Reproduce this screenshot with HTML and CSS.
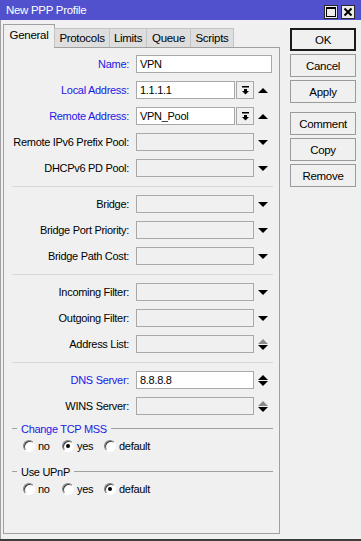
FILE: index.html
```html
<!DOCTYPE html>
<html>
<head>
<meta charset="utf-8">
<link rel="stylesheet" href="styles.css">
</head>
<body>
<div class="window">
  <div class="titlebar">
    <span class="title">New PPP Profile</span>
    <div class="tb-buttons">
      <span class="tb-btn"><svg width="10" height="10" viewBox="0 0 10 10"><rect x="0.5" y="0.5" width="9" height="9" fill="none" stroke="#000" stroke-width="1"/><rect x="0" y="0" width="10" height="2" fill="#000"/></svg></span>
      <span class="tb-btn"><svg width="10" height="10" viewBox="0 0 10 10"><path d="M1.5 1.5 L8.5 8.5 M8.5 1.5 L1.5 8.5" stroke="#000" stroke-width="2"/></svg></span>
    </div>
  </div>
  <div class="client">
    <div class="main">
      <div class="tabs">
        <div class="tab active w-general">General</div>
        <div class="tab w-protocols">Protocols</div>
        <div class="tab w-limits">Limits</div>
        <div class="tab w-queue">Queue</div>
        <div class="tab w-scripts">Scripts</div>
      </div>
      <div class="panel">
        <div class="form">
          <div class="row">
            <label class="lbl blue">Name:</label>
            <div class="field"><div class="box filled">VPN</div></div>
          </div>
          <div class="row">
            <label class="lbl blue">Local Address:</label>
            <div class="field"><div class="box filled">1.1.1.1</div><span class="combo"><svg width="7" height="9" viewBox="0 0 7 9"><rect x="0" y="0" width="7" height="1.5" fill="#000"/><rect x="2" y="3" width="3" height="2" fill="#000"/><polygon points="0,5 7,5 3.5,8.5" fill="#000"/></svg></span><span class="icon"><svg width="10" height="5" viewBox="0 0 10 5"><polygon points="0,5 10,5 5,0" fill="#000"/></svg></span></div>
          </div>
          <div class="row">
            <label class="lbl blue">Remote Address:</label>
            <div class="field"><div class="box filled">VPN_Pool</div><span class="combo"><svg width="7" height="9" viewBox="0 0 7 9"><rect x="0" y="0" width="7" height="1.5" fill="#000"/><rect x="2" y="3" width="3" height="2" fill="#000"/><polygon points="0,5 7,5 3.5,8.5" fill="#000"/></svg></span><span class="icon"><svg width="10" height="5" viewBox="0 0 10 5"><polygon points="0,5 10,5 5,0" fill="#000"/></svg></span></div>
          </div>
          <div class="row">
            <label class="lbl">Remote IPv6 Prefix Pool:</label>
            <div class="field"><div class="box"></div><span class="icon"><svg width="10" height="5" viewBox="0 0 10 5"><polygon points="0,0 10,0 5,5" fill="#000"/></svg></span></div>
          </div>
          <div class="row">
            <label class="lbl">DHCPv6 PD Pool:</label>
            <div class="field"><div class="box"></div><span class="icon"><svg width="10" height="5" viewBox="0 0 10 5"><polygon points="0,0 10,0 5,5" fill="#000"/></svg></span></div>
          </div>
          <div class="sep"></div>
          <div class="row">
            <label class="lbl">Bridge:</label>
            <div class="field"><div class="box"></div><span class="icon"><svg width="10" height="5" viewBox="0 0 10 5"><polygon points="0,0 10,0 5,5" fill="#000"/></svg></span></div>
          </div>
          <div class="row">
            <label class="lbl">Bridge Port Priority:</label>
            <div class="field"><div class="box"></div><span class="icon"><svg width="10" height="5" viewBox="0 0 10 5"><polygon points="0,0 10,0 5,5" fill="#000"/></svg></span></div>
          </div>
          <div class="row">
            <label class="lbl">Bridge Path Cost:</label>
            <div class="field"><div class="box"></div><span class="icon"><svg width="10" height="5" viewBox="0 0 10 5"><polygon points="0,0 10,0 5,5" fill="#000"/></svg></span></div>
          </div>
          <div class="sep"></div>
          <div class="row">
            <label class="lbl">Incoming Filter:</label>
            <div class="field"><div class="box"></div><span class="icon"><svg width="10" height="5" viewBox="0 0 10 5"><polygon points="0,0 10,0 5,5" fill="#000"/></svg></span></div>
          </div>
          <div class="row">
            <label class="lbl">Outgoing Filter:</label>
            <div class="field"><div class="box"></div><span class="icon"><svg width="10" height="5" viewBox="0 0 10 5"><polygon points="0,0 10,0 5,5" fill="#000"/></svg></span></div>
          </div>
          <div class="row">
            <label class="lbl">Address List:</label>
            <div class="field"><div class="box"></div><span class="icon"><svg width="10" height="11" viewBox="0 0 10 11"><polygon points="0,5 10,5 5,0" fill="#8a8a8a"/><polygon points="0,6 10,6 5,11" fill="#000"/></svg></span></div>
          </div>
          <div class="sep"></div>
          <div class="row">
            <label class="lbl blue">DNS Server:</label>
            <div class="field"><div class="box filled">8.8.8.8</div><span class="icon"><svg width="10" height="11" viewBox="0 0 10 11"><polygon points="0,5 10,5 5,0" fill="#000"/><polygon points="0,6 10,6 5,11" fill="#000"/></svg></span></div>
          </div>
          <div class="row">
            <label class="lbl">WINS Server:</label>
            <div class="field"><div class="box"></div><span class="icon"><svg width="10" height="11" viewBox="0 0 10 11"><polygon points="0,5 10,5 5,0" fill="#8a8a8a"/><polygon points="0,6 10,6 5,11" fill="#000"/></svg></span></div>
          </div>
        </div>
        <div class="group first">
          <div class="group-head"><span class="dash"></span><span class="blue">Change TCP MSS</span><span class="gline"></span></div>
          <div class="radios">
            <span class="radio r-no"><span class="dot"></span>no</span>
            <span class="radio r-yes"><span class="dot checked"></span>yes</span>
            <span class="radio"><span class="dot"></span>default</span>
          </div>
        </div>
        <div class="group">
          <div class="group-head"><span class="dash"></span><span>Use UPnP</span><span class="gline"></span></div>
          <div class="radios">
            <span class="radio r-no"><span class="dot"></span>no</span>
            <span class="radio r-yes"><span class="dot"></span>yes</span>
            <span class="radio"><span class="dot checked"></span>default</span>
          </div>
        </div>
      </div>
    </div>
    <div class="buttons">
      <button class="btn default">OK</button>
      <button class="btn">Cancel</button>
      <button class="btn">Apply</button>
      <button class="btn spaced">Comment</button>
      <button class="btn">Copy</button>
      <button class="btn">Remove</button>
    </div>
  </div>
</div>
</body>
</html>
```

FILE: styles.css
```css
* { box-sizing: border-box; margin: 0; padding: 0; }
html, body { margin: 0; background: #f0f0f0; }
body {
  font-family: "Liberation Sans", Arial, sans-serif;
  font-size: 11px;
  letter-spacing: -0.3px;
  color: #000;
}
.window {
  width: 361px;
  height: 541px;
  display: flex;
  flex-direction: column;
  background: #f0f0f0;
  border-bottom: 2px solid #3c3c3c;
}
.titlebar {
  height: 20px;
  flex: none;
  background: #5151cd;
  display: flex;
  align-items: center;
  justify-content: space-between;
  padding: 0 6px;
  color: #fff;
  font-size: 11.5px;
}
.tb-buttons { display: flex; gap: 3px; margin-top: 4px; }
.tb-btn {
  width: 14px;
  height: 14px;
  background: #ececec;
  border: 1px solid #2a2a2a;
  display: flex;
  align-items: center;
  justify-content: center;
}
.client {
  flex: 1;
  display: flex;
  gap: 10px;
  padding: 4px 5px 5px 2px;
  border-left: 1px solid #a0a0a0;
}
.main {
  width: 277px;
  display: flex;
  flex-direction: column;
}
.tabs {
  height: 23px;
  display: flex;
  align-items: flex-end;
  position: relative;
  z-index: 1;
}
.tab {
  height: 19px;
  display: flex;
  align-items: center;
  justify-content: center;
  background: #dedede;
  border: 1px solid #c4c4c4;
  border-bottom: none;
  margin-left: -1px;
  font-size: 11.5px;
}
.tab.active {
  height: 24px;
  margin-bottom: -1px;
  margin-left: 0;
  background: #f0f0f0;
  border-color: #a0a0a0;
  padding-bottom: 3px;
}
.w-general { width: 52px; }
.w-protocols { width: 56px; }
.w-limits { width: 38px; }
.w-queue { width: 45px; }
.w-scripts { width: 44px; }
.panel {
  flex: 1;
  border: 1px solid #a0a0a0;
  padding: 7px 6px 0 8px;
}
.form {
  display: flex;
  flex-direction: column;
  gap: 8px;
}
.row {
  display: grid;
  grid-template-columns: 117px 136px;
  column-gap: 7px;
  height: 18px;
  align-items: center;
}
.lbl { text-align: right; white-space: nowrap; }
.blue { color: #1a1ae6; }
.field { display: flex; align-items: center; height: 18px; }
.box {
  flex: 1;
  height: 18px;
  border: 1px solid #a8a8a8;
  background: #f0f0f0;
  padding-left: 3px;
  line-height: 16px;
  white-space: nowrap;
}
.box.filled { background: #fff; }
.combo {
  width: 18px;
  height: 18px;
  margin-left: 1px;
  border: 1px solid #a8a8a8;
  background: #f0f0f0;
  display: flex;
  align-items: center;
  justify-content: center;
}
.icon {
  width: 18px;
  height: 18px;
  display: flex;
  align-items: center;
  justify-content: center;
}
.sep {
  height: 1px;
  margin-top: 1px;
  background: #d9d9d9;
}
.group { margin-top: 7px; }
.group + .group { margin-top: 13px; }
.group-head {
  height: 13px;
  display: flex;
  align-items: center;
  gap: 4px;
}
.dash { width: 5px; height: 1px; background: #a0a0a0; }
.gline { flex: 1; height: 1px; background: #a0a0a0; }
.radios {
  margin-top: 5px;
  height: 12px;
  display: flex;
  align-items: center;
  padding-left: 11px;
}
.radio { display: flex; align-items: center; gap: 3px; }
.r-no { width: 39px; }
.r-yes { width: 42px; }
.dot {
  width: 12px;
  height: 12px;
  border-radius: 50%;
  background: #fff;
  border: 1px solid;
  border-color: #808080 #ffffff #ffffff #808080;
  box-shadow: inset 1px 1px 0 #404040;
  display: flex;
  align-items: center;
  justify-content: center;
}
.dot.checked::after {
  content: "";
  width: 4px;
  height: 4px;
  border-radius: 50%;
  background: #000;
}
.buttons {
  width: 66px;
  display: flex;
  flex-direction: column;
  gap: 3px;
  padding-top: 4px;
}
.btn {
  height: 23px;
  width: 66px;
  font-family: inherit;
  font-size: 11.5px;
  letter-spacing: -0.3px;
  color: #000;
  background: #f0f0f0;
  border: 1px solid #9a9a9a;
}
.btn.default { border: 2px solid #1a1a1a; }
.btn.spaced { margin-top: 6px; }
```
